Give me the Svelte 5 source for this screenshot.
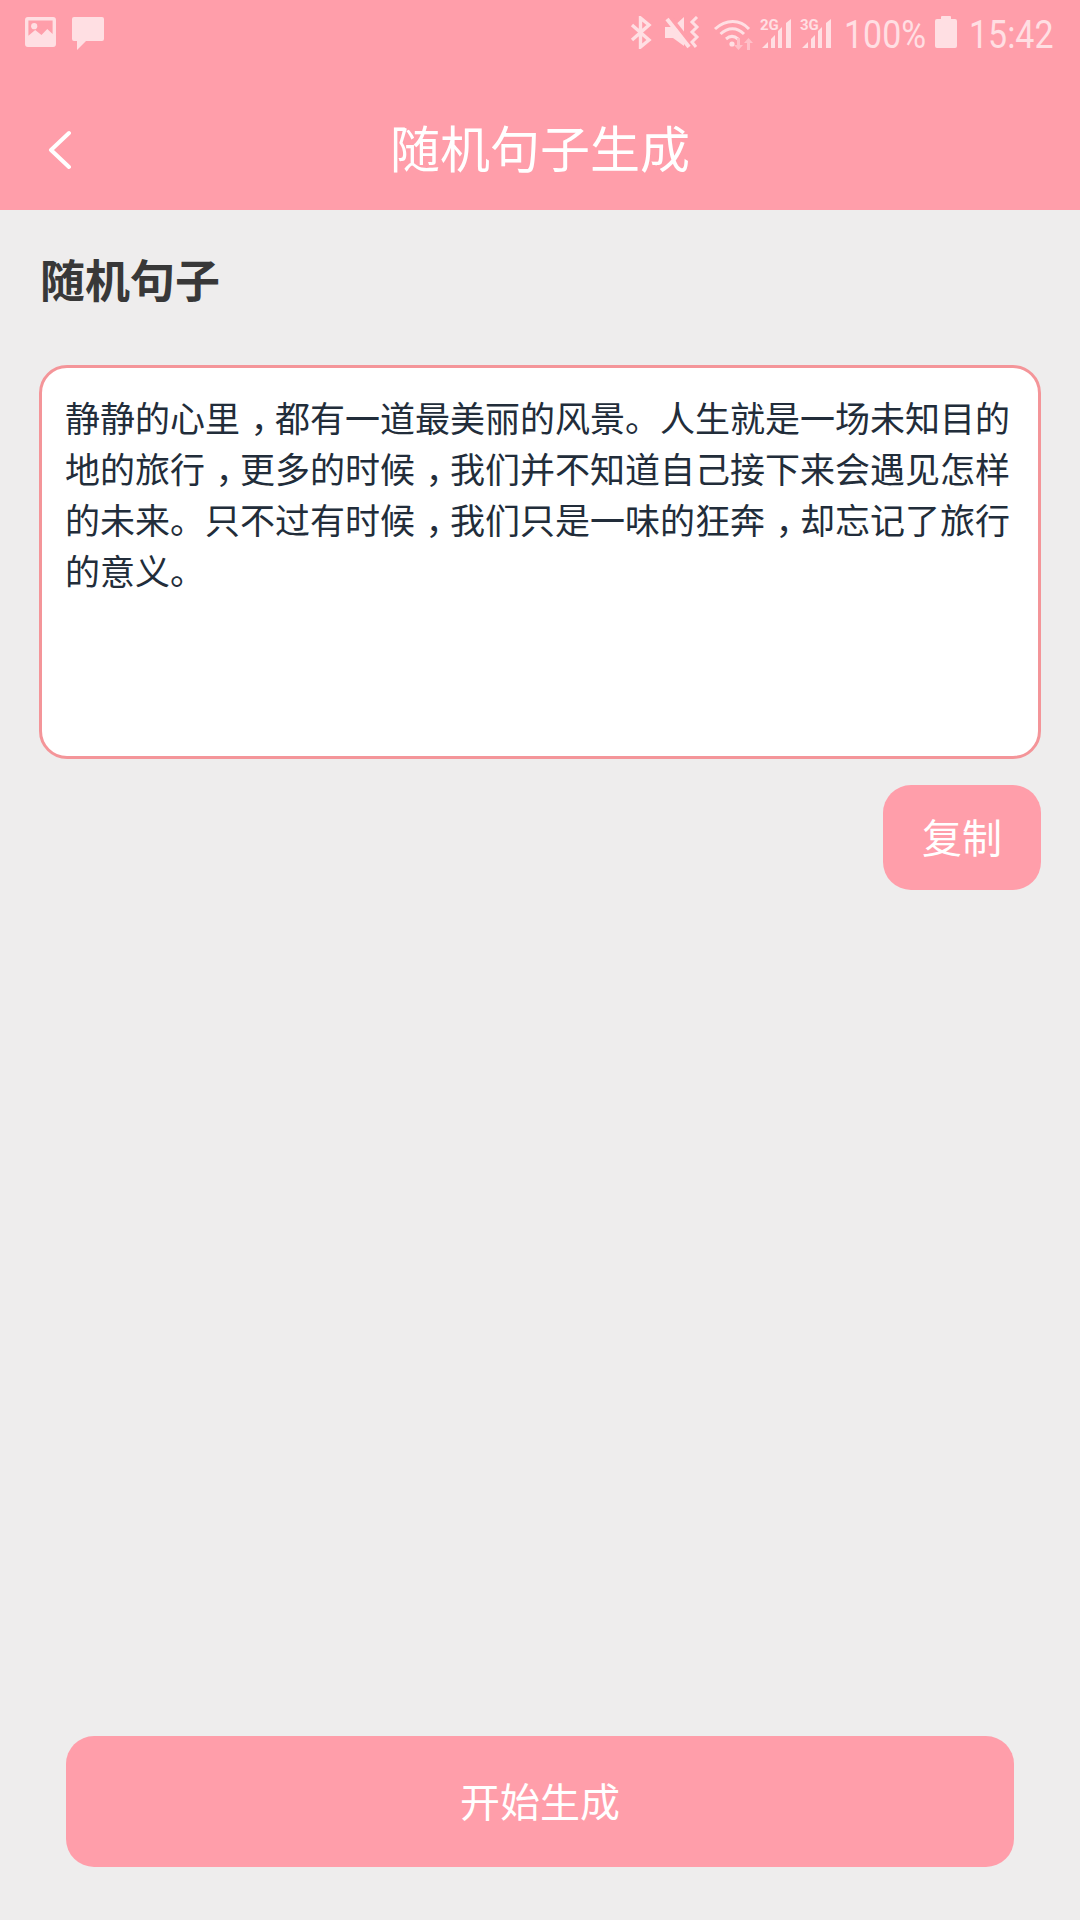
<script>
  const lines = [
    '静静的心里，都有一道最美丽的风景。人生就是一场未知目的',
    '地的旅行，更多的时候，我们并不知道自己接下来会遇见怎样',
    '的未来。只不过有时候，我们只是一味的狂奔，却忘记了旅行',
    '的意义。'
  ].map((line) => line.split('，'))
  const networks = ['2G', '3G']
</script>

<div class="page">
  <div class="status">
    <div class="notes">
      <svg width="31" height="30" viewBox="0 0 32 31">
        <path fill-rule="evenodd" d="M3 0h26a3 3 0 0 1 3 3v25a3 3 0 0 1-3 3H3a3 3 0 0 1-3-3V3a3 3 0 0 1 3-3zm.5 3.500v16l7-6 6.500 5 6-6 5.500 5V3.500z"/>
        <circle cx="9.500" cy="9.500" r="3.200"/>
      </svg>
      <svg width="32" height="33" viewBox="0 0 32 33">
        <path d="M2 0h28a2 2 0 0 1 2 2v20a2 2 0 0 1-2 2H14l-9 9v-9H2a2 2 0 0 1-2-2V2a2 2 0 0 1 2-2z"/>
      </svg>
    </div>
    <div class="system">
      <svg class="bt" width="22" height="33" viewBox="0 0 22 33">
        <path fill="none" stroke-width="3.400" d="M2 9l17 15-8.500 7V2L19 9 2 24"/>
      </svg>
      <svg class="mute" width="36" height="34" viewBox="0 0 36 34">
        <path d="M0 11h8L19 1v29L8 22H0z"/>
        <path class="gap" d="M5 1l22 28"/>
        <path class="slash" d="M2 3l22 28"/>
        <path fill="none" stroke-width="3" d="M32 1l-5 5 5 5-5 5 5 5-5 5 4 5"/>
      </svg>
      <svg class="wifi" width="44" height="36" viewBox="0 0 44 36">
        <g fill="none" stroke-width="3">
          <path d="M2 13C13 3 27 3 36 13"/>
          <path d="M7.500 18C15 11 24 11 31 18"/>
          <path d="M13 23c4-3.500 8-3.500 12 0"/>
        </g>
        <circle cx="19" cy="28" r="2.600"/>
        <path class="faint" d="M24 22h3v7h3l-4.500 5-4.500-5h3zM34 34v-7h-3l4.500-5 4.500 5h-3v7z"/>
      </svg>
      {#each networks as net}
        <div class="signal">
          <span>{net}</span>
          <svg width="34" height="29" viewBox="0 0 34 29">
            <path d="M3 29l6-6v6zM12 29V20l4-4v13zM19 29V12l4-4v21zM27 29V4l5-4v29z" />
          </svg>
        </div>
      {/each}
      <span class="num pct">100%</span>
      <svg class="batt" width="22" height="32" viewBox="0 0 22 32">
        <path d="M7 0h8a1 1 0 0 1 1 1v2h4a2 2 0 0 1 2 2v25a2 2 0 0 1-2 2H2a2 2 0 0 1-2-2V5a2 2 0 0 1 2-2h4V1a1 1 0 0 1 1-1z"/>
      </svg>
      <span class="num time">15:42</span>
    </div>
  </div>

  <header>
    <svg class="back" width="24" height="40" viewBox="0 0 24 40">
      <path d="M22 3L4 20l18 17" />
    </svg>
    <h1>随机句子生成</h1>
  </header>

  <main>
    <h2>随机句子</h2>
    <div class="box">
      {#each lines as parts}
        <div>{#each parts as part, i}{part}{#if i < parts.length - 1}<span class="comma">，</span>{/if}{/each}</div>
      {/each}
    </div>
    <button class="copy"><span>复制</span></button>
    <button class="start"><span>开始生成</span></button>
  </main>
</div>

<style>
  :global(body) {
    margin: 0;
    font-family: "Noto Sans CJK SC", "Noto Sans", sans-serif;
  }
  .page {
    width: 1080px;
    height: 1920px;
    display: flex;
    flex-direction: column;
    background: #eeeded;
  }
  .status {
    height: 70px;
    background: #ff9eaa;
    display: flex;
    justify-content: space-between;
    align-items: flex-start;
    padding: 0 29px 0 25px;
    box-sizing: border-box;
  }
  .status svg { fill: #ffdfe3; stroke: #ffdfe3; stroke-width: 0; }
  .notes {
    display: flex;
    gap: 16px;
    padding-top: 17px;
  }
  .system {
    display: flex;
    align-items: flex-start;
    padding-top: 16px;
  }
  .system .bt { margin-right: 13px; }
  .system .mute { margin-right: 12px; }
  .system .mute .gap { stroke: #ff9eaa; stroke-width: 4; }
  .system .mute .slash { stroke-width: 4; }
  .system .wifi { margin-right: 2px; }
  .system .faint { fill: #ffc0c8; }
  .signal {
    position: relative;
    width: 34px;
    height: 33px;
    margin-right: 6px;
  }
  .signal svg {
    position: absolute;
    left: 0;
    top: 3px;
  }
  .signal span {
    position: absolute;
    left: 1px;
    top: 2px;
    z-index: 1;
    font: 700 15px/15px Roboto, sans-serif;
    color: #ffdfe3;
  }
  .num {
    font: 400 39px/38px Roboto, sans-serif;
    color: #ffdfe3;
    transform: scaleX(.87);
    transform-origin: 0 50%;
  }
  .pct { width: 91px; margin-left: 5px; }
  .batt { margin-right: 12px; }
  .time { width: 82px; }
  header {
    height: 140px;
    background: #ff9eaa;
    position: relative;
    display: flex;
    align-items: center;
    justify-content: center;
  }
  .back {
    position: absolute;
    left: 47px;
    top: 60px;
    fill: none;
    stroke: #fff;
    stroke-width: 4;
    stroke-linecap: round;
    stroke-linejoin: round;
  }
  h1 {
    margin: 12px 0 0;
    font-size: 50px;
    font-weight: 400;
    color: #fff;
  }
  main {
    flex: 1;
    display: flex;
    flex-direction: column;
    padding: 0 39px 53px;
  }
  h2 {
    margin: 39px 0 0 1px;
    font-size: 45px;
    line-height: 60px;
    font-weight: 700;
    color: #383838;
  }
  .box {
    margin-top: 56px;
    height: 394px;
    box-sizing: border-box;
    padding: 23px 24px 0 23px;
    background: #fff;
    border: 3px solid #f49599;
    border-radius: 28px;
    font-size: 35px;
    line-height: 51px;
    color: #222d3a;
    overflow: hidden;
  }
  .comma {
    font-feature-settings: "halt";
    padding: 0 .2em 0 .3em;
  }
  button {
    border: 0;
    background: #ff9eaa;
    color: #fff;
    font-family: inherit;
    font-size: 40px;
    font-weight: 400;
    padding: 0 0 4px;
  }
  .copy {
    align-self: flex-end;
    margin-top: 26px;
    width: 158px;
    height: 105px;
    border-radius: 28px;
  }
  .start {
    margin: auto 27px 0;
    height: 131px;
    border-radius: 28px;
  }
</style>
